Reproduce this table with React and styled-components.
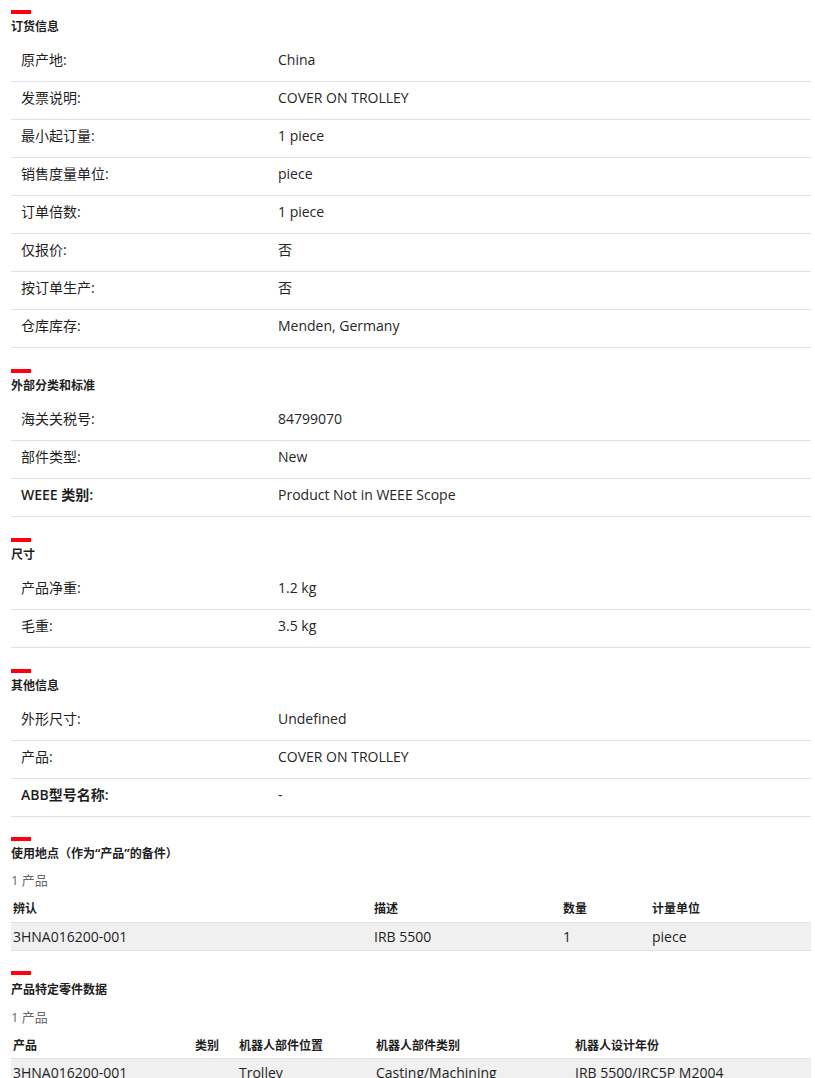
import React from 'react';
import styled, { createGlobalStyle } from 'styled-components';

const GlobalStyle = createGlobalStyle`
  body {
    margin: 0;
    background: #fff;
    font-family: "Open Sans", "Noto Sans", "Noto Sans CJK SC", sans-serif;
    color: #262626;
  }
`;

const Page = styled.div`
  width: 800px;
  padding: 10px 4px 0 11px;
`;

const Section = styled.section`
  margin-bottom: ${p => p.$gap ?? 21}px;
`;

const Bar = styled.div`
  width: 20px;
  height: 4px;
  background: #ff000f;
`;

const Title = styled.h3`
  margin: ${p => p.$top ?? 5}px 0 0;
  font-size: 12px;
  line-height: 16px;
  font-weight: 700;
  color: #1f1f1f;
`;

const List = styled.div`
  margin-top: 9px;
`;

const Row = styled.div`
  display: grid;
  grid-template-columns: 267px 1fr;
  height: 38px;
  padding-top: 8px;
  line-height: 16px;
  align-items: start;
  border-bottom: 1px solid #e0e0e6;
  box-sizing: border-box;
  font-size: 14px;
`;

const Label = styled.div`
  padding-left: 10px;
  color: #1f1f1f;
  font-weight: ${p => (p.$bold ? 600 : 400)};
`;

const Value = styled.div`
  color: #262626;
`;

const Count = styled.div`
  margin-top: ${p => p.$top}px;
  font-size: 13px;
  line-height: 16px;
  color: #696969;
`;

const Table = styled.table`
  width: 800px;
  border-collapse: collapse;
  table-layout: fixed;
  margin-top: ${p => p.$top}px;
`;

const Th = styled.th`
  box-sizing: border-box;
  width: ${p => p.$w}px;
  height: ${p => p.$h}px;
  padding: 0 2px;
  text-align: left;
  font-size: 12px;
  font-weight: 700;
  color: #1f1f1f;
`;

const Td = styled.td`
  height: 27px;
  padding: 0 2px;
  font-size: 14px;
  color: #1f1f1f;
  white-space: nowrap;
`;

const BodyRow = styled.tr`
  background: #f0f0f0;
  border-top: 1px solid #e2e2e2;
  border-bottom: 1px solid #e2e2e2;
`;

const sections = [
  {
    title: '订货信息',
    rows: [
      ['原产地:', 'China'],
      ['发票说明:', 'COVER ON TROLLEY'],
      ['最小起订量:', '1 piece'],
      ['销售度量单位:', 'piece'],
      ['订单倍数:', '1 piece'],
      ['仅报价:', '否'],
      ['按订单生产:', '否'],
      ['仓库库存:', 'Menden, Germany'],
    ],
  },
  {
    title: '外部分类和标准',
    rows: [
      ['海关关税号:', '84799070'],
      ['部件类型:', 'New'],
      ['WEEE 类别:', 'Product Not in WEEE Scope', true],
    ],
  },
  {
    title: '尺寸',
    rows: [
      ['产品净重:', '1.2 kg'],
      ['毛重:', '3.5 kg'],
    ],
  },
  {
    title: '其他信息',
    gap: 20,
    rows: [
      ['外形尺寸:', 'Undefined'],
      ['产品:', 'COVER ON TROLLEY'],
      ['ABB型号名称:', '-', true],
    ],
  },
];

const tables = [
  {
    title: '使用地点（作为“产品”的备件）',
    titleTop: 5,
    countTop: 10,
    tableTop: 6,
    headH: 28,
    cols: [['辨认', 361], ['描述', 189], ['数量', 89], ['计量单位', 161]],
    data: ['3HNA016200-001', 'IRB 5500', '1', 'piece'],
  },
  {
    title: '产品特定零件数据',
    titleTop: 7,
    countTop: 11,
    tableTop: 8,
    headH: 26,
    cols: [
      ['产品', 182],
      ['类别', 44],
      ['机器人部件位置', 137],
      ['机器人部件类别', 199],
      ['机器人设计年份', 238],
    ],
    data: ['3HNA016200-001', '', 'Trolley', 'Casting/Machining', 'IRB 5500/IRC5P M2004'],
  },
];

export default function App() {
  return (
    <Page>
      <GlobalStyle />
      {sections.map(s => (
        <Section key={s.title} $gap={s.gap}>
          <Bar />
          <Title>{s.title}</Title>
          <List>
            {s.rows.map(([l, v, b]) => (
              <Row key={l}>
                <Label $bold={b}>{l}</Label>
                <Value>{v}</Value>
              </Row>
            ))}
          </List>
        </Section>
      ))}
      {tables.map(t => (
        <Section key={t.title} $gap={20}>
          <Bar />
          <Title $top={t.titleTop}>{t.title}</Title>
          <Count $top={t.countTop}>1 产品</Count>
          <Table $top={t.tableTop}>
            <thead>
              <tr>
                {t.cols.map(([c, w]) => (
                  <Th key={c} $w={w} $h={t.headH}>{c}</Th>
                ))}
              </tr>
            </thead>
            <tbody>
              <BodyRow>
                {t.data.map((d, i) => (
                  <Td key={i}>{d}</Td>
                ))}
              </BodyRow>
            </tbody>
          </Table>
        </Section>
      ))}
    </Page>
  );
}
